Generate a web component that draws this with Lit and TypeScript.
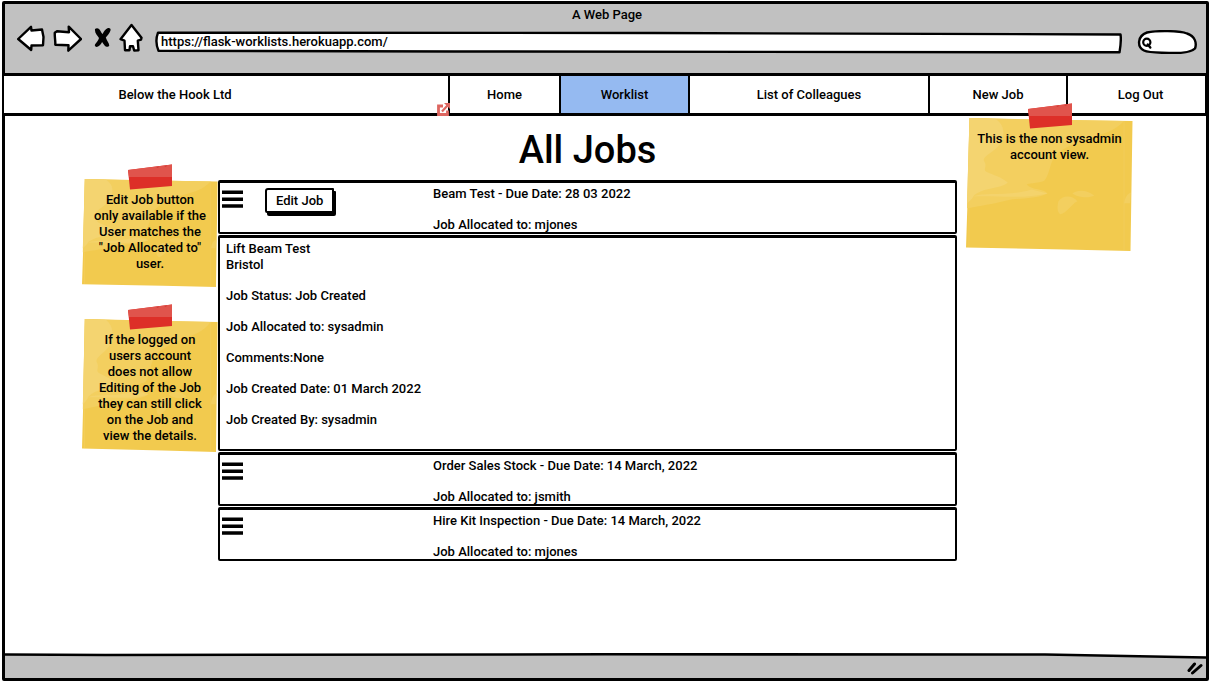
import { LitElement, html, svg, css, nothing } from "lit";
import { customElement, property, state } from "lit/decorators.js";
import { classMap } from "lit/directives/class-map.js";

interface Job {
  id: string;
  title: string;
  allocated: string;
  editable: boolean;
  details?: string[][];
}

const JOBS: Job[] = [
  {
    id: "beam",
    title: "Beam Test - Due Date: 28 03 2022",
    allocated: "Job Allocated to: mjones",
    editable: true,
    details: [
      ["Lift Beam Test", "Bristol"],
      ["Job Status: Job Created"],
      ["Job Allocated to: sysadmin"],
      ["Comments:None"],
      ["Job Created Date: 01 March 2022"],
      ["Job Created By: sysadmin"],
    ],
  },
  {
    id: "stock",
    title: "Order Sales Stock - Due Date: 14 March, 2022",
    allocated: "Job Allocated to: jsmith",
    editable: false,
  },
  {
    id: "kit",
    title: "Hire Kit Inspection - Due Date: 14 March, 2022",
    allocated: "Job Allocated to: mjones",
    editable: false,
  },
];

const LINKS = ["Home", "Worklist", "List of Colleagues", "New Job", "Log Out"];

@customElement("sticky-note")
class StickyNote extends LitElement {
  @property({ type: Array }) lines: string[] = [];

  static styles = css`
    :host {
      display: block;
      box-sizing: border-box;
      position: relative;
      min-height: 123px;
      padding-top: 15px;
    }
    .paper {
      position: absolute;
      inset: 15px 0 0 0;
      width: 100%;
      height: calc(100% - 15px);
    }
    .tape {
      position: absolute;
      top: 0;
      left: calc(50% - 22px);
      width: 44px;
      height: 26px;
    }
    .text {
      position: relative;
      margin: 0;
      padding: 13px 0 8px;
      text-align: center;
      line-height: 16px;
    }
  `;

  render() {
    return html`
      <svg class="paper" viewBox="0 0 168 134" preserveAspectRatio="none" aria-hidden="true">
        <path d="M3.5 0L60 1.5L167.5 3L165.5 134L100 132.5L0 130.5L2 70Z" fill="#f2ca4e" />
        <path
          d="M3.5 0L159 3C148 14 140 15 128 19C112 24 98 30 91 37C84 44 85 55 79 63C74 66 66 65 61 67C67 73 78 71 82 76C70 82 55 80 41 83C26 87 15 88 1 91Z"
          fill="#f3cf5f" />
        <path
          d="M3.5 0L30 1C40 8 38 17 36 24C30 34 17 38 18 43C22 49 17 51 20 54C29 58 36 60 42 65C34 72 20 69 8 78C6 82 3 84 1 86Z"
          fill="#f4d470" />
        <path d="M7 79C20 74 40 80 66 72L82 76C60 82 30 78 7 79Z" fill="#f4d36c" />
        <path d="M107 76C112 72 122 72 129 78C124 81 112 80 107 76Z" fill="#f3cf5f" />
        <path d="M93 84C97 77 108 78 112 84C106 87 101 96 95 97C91 95 92 88 93 84Z" fill="#f3cf5f" />
        <path d="M159 86C160 79 163 76 166 75L165 86Z" fill="#f3cf5f" />
        <path d="M159 3V133M3 91V130" stroke="#f4d064" stroke-width="0.6" fill="none" />
      </svg>
      <svg class="tape" viewBox="0 0 44 26" aria-hidden="true">
        <path d="M0 6L44 0.5V22L2 25.5Z" fill="#dd2f28" />
        <path d="M0 6L44 0.5V13H1Z" fill="#e0544c" />
        <path d="M28 3L31 2.5L30 4ZM36 2L39 1.5L38 3Z" fill="#cf3a34" />
      </svg>
      <p class="text">${this.lines.map((l, i) => html`${i ? html`<br />` : nothing}${l}`)}</p>
    `;
  }
}

@customElement("job-card")
class JobCard extends LitElement {
  @property({ type: Object }) job!: Job;
  @property({ type: Boolean }) open = false;

  static styles = css`
    :host {
      display: flex;
      flex-direction: column;
      gap: 1px;
    }
    .box {
      border: 2px solid #000;
      border-top-width: 3px;
      border-radius: 2px;
      background: #fff;
    }
    .summary {
      display: grid;
      grid-template-columns: 213px minmax(0, 1fr);
    }
    .actions {
      display: flex;
      align-items: flex-start;
      gap: 22px;
      padding: 5px 0 0 2px;
    }
    .burger {
      display: block;
      border: 0;
      padding: 2px 0;
      background: none;
      cursor: pointer;
    }
    .burger svg {
      display: block;
    }
    .edit {
      font: inherit;
      line-height: 16px;
      color: inherit;
      border: 2px solid #000;
      border-radius: 3px 1px 2px 2px;
      background: #fff;
      padding: 3px 9px 2px;
      box-shadow: 2px 3px 0 #000;
      cursor: pointer;
    }
    p {
      margin: 0;
    }
    .texts {
      display: flex;
      flex-direction: column;
      gap: 15px;
      line-height: 16px;
    }
    .summary .texts {
      padding-top: 3px;
      margin-bottom: -1px;
    }
    .details {
      padding: 3px 6px 21px;
    }
  `;

  private toggle() {
    this.dispatchEvent(new CustomEvent("toggle-job", { detail: this.job.id }));
  }

  render() {
    const { title, allocated, editable, details } = this.job;
    return html`
      <div class="box summary">
        <div class="actions">
          <button class="burger" aria-label="Show job details" aria-expanded=${this.open} @click=${this.toggle}>
            <svg width="21" height="18" viewBox="0 0 21 18">
              <path d="M0 2.200H21M0 9.200H21M0 16H21" stroke="#000" stroke-width="3.400" />
            </svg>
          </button>
          ${editable ? html`<button class="edit">Edit Job</button>` : nothing}
        </div>
        <div class="texts">
          <p>${title}</p>
          <p>${allocated}</p>
        </div>
      </div>
      ${this.open && details
        ? html`<div class="box texts details">
            ${details.map((group) => html`<p>${group.map((l, i) => html`${i ? html`<br />` : nothing}${l}`)}</p>`)}
          </div>`
        : nothing}
    `;
  }
}

const sketch = (d: string) =>
  svg`<path d=${d} fill="#fff" stroke="#000" stroke-width="2.4" stroke-linejoin="round" />`;

@customElement("app-root")
class AppRoot extends LitElement {
  @state() private openJob = "beam";
  @state() private current = "Worklist";

  static styles = css`
    :host {
      display: flex;
      box-sizing: border-box;
      min-height: 100vh;
      padding: 1px 1px 3px 2px;
      background: #fff;
      color: #000;
      font: 500 13px/16px Roboto, "Liberation Sans", sans-serif;
    }
    .window {
      flex: 1;
      min-width: 0;
      display: flex;
      flex-direction: column;
      border: 3px solid #000;
      border-radius: 2px;
    }
    .chrome {
      background: #c1c1c1;
      padding: 3px 9px 19px 12px;
    }
    .title {
      margin: 0;
      text-align: center;
    }
    .toolbar {
      display: flex;
      align-items: flex-end;
      gap: 15px;
      height: 31px;
    }
    .tools {
      display: flex;
      gap: 8px;
      align-self: flex-start;
      margin-right: -3px;
    }
    .tools button {
      border: 0;
      padding: 0;
      background: none;
      cursor: pointer;
    }
    .tools svg {
      display: block;
    }
    .field {
      position: relative;
      display: flex;
      height: 24px;
    }
    .field svg {
      position: absolute;
      inset: 0;
      width: 100%;
      height: 100%;
    }
    .field input {
      position: relative;
      flex: 1;
      min-width: 0;
      font: inherit;
      color: inherit;
      border: 0;
      outline: 0;
      background: none;
      padding: 0 6px;
    }
    .url {
      flex: 1;
    }
    .search {
      width: 60px;
    }
    .search input {
      padding: 0 8px 0 18px;
    }
    nav {
      display: grid;
      grid-template-columns: 446fr 111fr 129fr 240fr 138fr 137fr;
      margin: 0 -3px;
      border: solid #000;
      border-width: 3px 4px 3px 2px;
      background: #fff;
      line-height: 37px;
      text-align: center;
    }
    .brand,
    nav a {
      color: inherit;
      text-decoration: none;
      border-right: 2px solid #000;
    }
    nav a:last-child {
      border-right: 0;
      padding-left: 8px;
    }
    .brand {
      position: relative;
      padding-right: 102px;
    }
    .badge {
      position: absolute;
      right: -2px;
      bottom: -3px;
      width: 13px;
      height: 13px;
    }
    .active {
      background: #95baf1;
    }
    main {
      flex: 1;
      display: grid;
      grid-template-columns: 136px minmax(0, 1fr) 167px;
      align-items: start;
      padding: 0 73px 0 77px;
    }
    .notes {
      display: grid;
      gap: 17px;
      padding-top: 48px;
    }
    .aside {
      margin-top: -13px;
    }
    .aside sticky-note {
      min-height: 148px;
    }
    section {
      margin-right: 9px;
    }
    h1 {
      margin: 0;
      padding: 10px 0 6px;
      text-align: center;
      font-size: 38px;
      line-height: 48px;
      font-weight: 500;
    }
    .jobs {
      display: grid;
      gap: 1px;
    }
    .status {
      position: relative;
      display: flex;
      justify-content: flex-end;
      height: 25px;
    }
    .status .bar {
      position: absolute;
      inset: 0;
      width: 100%;
      height: 100%;
    }
    .grip {
      position: relative;
      margin: 8px 3px 0 0;
    }
  `;

  render() {
    return html`
      <div class="window">
        <header class="chrome">
          <p class="title">A Web Page</p>
          <div class="toolbar">
            <div class="tools">
              <button aria-label="Back">
                <svg width="28" height="28" viewBox="0 0 28 28">
                  ${sketch("M1.200 15L14 2.800L14.500 6.500L25 5.500L26.500 13L26 21.300L14.500 21.500L14.200 26Z")}
                </svg>
              </button>
              <button aria-label="Forward">
                <svg width="29" height="28" viewBox="0 0 29 28">
                  ${sketch("M28 15L15.700 2.700L16 8.200L4 7.200L1.800 8.700C1.500 12.700 2.500 16.700 2.300 20.700L15.500 21.200L15.300 26.700Z")}
                </svg>
              </button>
              <button aria-label="Stop">
                <svg width="21" height="28" viewBox="0 0 21 28">
                  <path
                    d="M5 5C7 3.300 9.500 4.500 10.500 7C11.200 8.500 12 9.500 12.700 10C13.500 7.500 15.500 5 18 4C20 3.500 21.200 5 20.300 7C19.300 10 17 11.800 15.800 13.500C16.800 16.500 19 19 19.300 21.500C18.500 23.500 16 23 14.800 21.700C13.700 20.500 12.800 19 12.100 18C10.800 20.500 9.500 22 7.500 22.800C5 23.300 4.200 21.500 5.300 20C7 18 8.500 16 9 14C7.500 11.500 4.500 9 5 5Z"
                    fill="#000" />
                </svg>
              </button>
              <button aria-label="Home">
                <svg width="24" height="30" viewBox="0 0 24 30">
                  ${sketch(
                    "M12.500 2L22.500 14.700L22 16.700L18.800 17.700L19.500 27.200L15.200 27.500L14 23.200L11 23.200L10.500 27.200L6 27.200L5.500 17.700L1.500 16.200Z"
                  )}
                </svg>
              </button>
            </div>
            <div class="field url">
              <svg viewBox="0 0 968 24" preserveAspectRatio="none" aria-hidden="true">
                ${sketch("M3 2.700L500 3L966.500 4.500C967.500 10 966.500 16 965.500 22.300L300 21.500L3.500 20.700C1 15 1 8 3 2.700Z")}
              </svg>
              <input type="text" aria-label="Address" value="https://flask-worklists.herokuapp.com/" />
            </div>
            <div class="field search">
              <svg viewBox="0 0 60 24" aria-hidden="true">
                ${sketch(
                  "M10 2.500C20 0.500 42 0.500 50 3.500C58 6 60 13 58 18.500C54 22.500 42 23.300 32 23C22 22.500 12 23 7 20.500C0 17 0 6 10 2.500Z"
                )}
                <circle cx="9.800" cy="12.300" r="3.600" fill="#fff" stroke="#000" stroke-width="2.200" />
                <path d="M10.800 14.500L13.300 17.500" stroke="#000" stroke-width="2.400" stroke-linecap="round" />
              </svg>
              <input type="text" aria-label="Search" />
            </div>
          </div>
        </header>

        <nav>
          <div class="brand">
            Below the Hook Ltd
            <svg class="badge" viewBox="0 0 13 13" aria-hidden="true">
              <path d="M6 3H1.500V11.500H10.500V7.500" fill="none" stroke="#dd6660" stroke-width="2.800" />
              <path d="M5 8.500L10.500 2.500" stroke="#dd6660" stroke-width="2.200" />
              <path d="M7 0H13V6Z" fill="#dd6660" />
            </svg>
          </div>
          ${LINKS.map(
            (l) => html`<a
              href="#"
              class=${classMap({ active: l === this.current })}
              @click=${(e: Event) => {
                e.preventDefault();
                this.current = l;
              }}
              >${l}</a
            >`
          )}
        </nav>

        <main>
          <div class="notes">
            <sticky-note
              .lines=${["Edit Job button", "only available if the", "User matches the", '"Job Allocated to"', "user."]}
            ></sticky-note>
            <sticky-note
              .lines=${[
                "If the logged on",
                "users account",
                "does not allow",
                "Editing of the Job",
                "they can still click",
                "on the Job and",
                "view the details.",
              ]}
            ></sticky-note>
          </div>
          <section>
            <h1>All Jobs</h1>
            <div class="jobs">
              ${JOBS.map(
                (j) => html`<job-card
                  .job=${j}
                  .open=${this.openJob === j.id}
                  @toggle-job=${(e: CustomEvent) => (this.openJob = this.openJob === e.detail ? "" : e.detail)}
                ></job-card>`
              )}
            </div>
          </section>
          <div class="aside">
            <sticky-note .lines=${["This is the non sysadmin", "account view."]}></sticky-note>
          </div>
        </main>

        <footer class="status">
          <svg class="bar" viewBox="0 0 1201 25" preserveAspectRatio="none" aria-hidden="true">
            <path d="M0 1.500L100 2L600 1.300L1040 1.500L1201 4.500V25H0Z" fill="#c1c1c1" />
            <path d="M0 1.500L100 2L600 1.300L1040 1.500L1201 4.500" fill="none" stroke="#000" stroke-width="2.600" />
          </svg>
          <svg class="grip" width="16" height="14" viewBox="0 0 16 14" aria-hidden="true">
            <path d="M2 9.500L7.500 3M5.500 12L14 4.500" stroke="#000" stroke-width="3" stroke-linecap="round" />
          </svg>
        </footer>
      </div>
    `;
  }
}
